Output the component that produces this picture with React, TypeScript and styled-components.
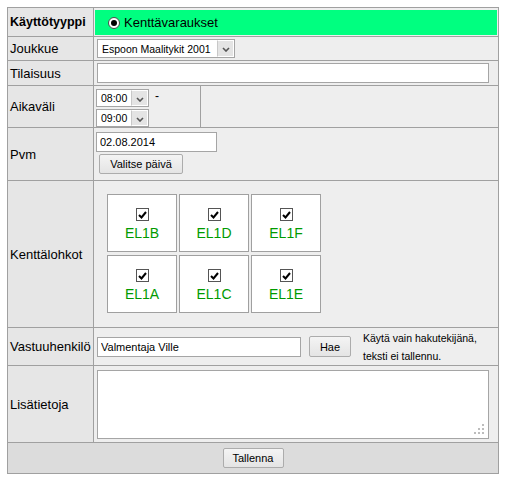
import React from "react"
import styled, { createGlobalStyle } from "styled-components"

const GlobalStyle = createGlobalStyle`
    html, body {
        margin: 0;
        padding: 0;
        background: #fff;
    }
    body {
        font-family: "Liberation Sans", Arial, sans-serif;
        color: #000;
    }
    * {
        box-sizing: border-box;
    }
`

const fields = [
    { code: "EL1B", checked: true },
    { code: "EL1D", checked: true },
    { code: "EL1F", checked: true },
    { code: "EL1A", checked: true },
    { code: "EL1C", checked: true },
    { code: "EL1E", checked: true },
]

function Chevron() {
    return (
        <svg width="8" height="5" viewBox="0 0 8 5">
            <path d="M1 1 L4 4 L7 1" fill="none" stroke="#555" strokeWidth="1.6" />
        </svg>
    )
}

function Select({ value, width, height }: { value: string; width: number; height: number }) {
    return (
        <SelectBox $w={width} $h={height}>
            <SelectText>{value}</SelectText>
            <ArrowBox>
                <Chevron />
            </ArrowBox>
        </SelectBox>
    )
}

function CheckMark() {
    return (
        <CheckBox>
            <svg width="9" height="8" viewBox="0 0 9 8">
                <path d="M1 4 L3.5 6.5 L8 1" fill="none" stroke="#000" strokeWidth="2" />
            </svg>
        </CheckBox>
    )
}

function App() {
    return (
        <Page>
            <GlobalStyle />
            <Form>
                <Label $bold>Käyttötyyppi</Label>
                <TypeCell>
                    <GreenBar>
                        <Radio />
                        <span>Kenttävaraukset</span>
                    </GreenBar>
                </TypeCell>

                <Label>Joukkue</Label>
                <Value>
                    <Select value="Espoon Maalitykit 2001" width={138} height={19} />
                </Value>

                <Label>Tilaisuus</Label>
                <Value>
                    <TextInput $w={392} />
                </Value>

                <Label>Aikaväli</Label>
                <SplitCell>
                    <TimePart>
                        <TimeRow>
                            <Select value="08:00" width={53} height={18} />
                            <Dash>-</Dash>
                        </TimeRow>
                        <TimeRow>
                            <Select value="09:00" width={53} height={18} />
                        </TimeRow>
                    </TimePart>
                    <EmptyPart />
                </SplitCell>

                <Label>Pvm</Label>
                <DateCell>
                    <TextInput $w={121} defaultValue="02.08.2014" />
                    <DateButton>Valitse päivä</DateButton>
                </DateCell>

                <Label>Kenttälohkot</Label>
                <FieldCell>
                    <FieldGrid>
                        {fields.map((f) => (
                            <Tile key={f.code}>
                                {f.checked && <CheckMark />}
                                <TileCode>{f.code}</TileCode>
                            </Tile>
                        ))}
                    </FieldGrid>
                </FieldCell>

                <Label>Vastuuhenkilö</Label>
                <Value>
                    <TextInput $w={204} defaultValue="Valmentaja Ville" />
                    <SearchButton>Hae</SearchButton>
                    <Hint>
                        Käytä vain hakutekijänä,
                        <br />
                        teksti ei tallennu.
                    </Hint>
                </Value>

                <Label>Lisätietoja</Label>
                <NotesCell>
                    <NotesWrap>
                        <Notes />
                        <Grip width="12" height="12" viewBox="0 0 12 12">
                            <rect x="8" y="0" width="2" height="2" />
                            <rect x="4" y="4" width="2" height="2" />
                            <rect x="8" y="4" width="2" height="2" />
                            <rect x="0" y="8" width="2" height="2" />
                            <rect x="4" y="8" width="2" height="2" />
                            <rect x="8" y="8" width="2" height="2" />
                        </Grip>
                    </NotesWrap>
                </NotesCell>

                <Footer>
                    <SaveButton>Tallenna</SaveButton>
                </Footer>
            </Form>
        </Page>
    )
}

// taulukko

const Page = styled.div`
    padding: 7px;
`

const Form = styled.div`
    display: grid;
    grid-template-columns: 85px 404px;
    grid-template-rows: 28px 23px 24px 41px 52px 146px 37px 76px 30px;
    gap: 1px;
    padding: 1px;
    width: fit-content;
    background: #a0a0a0;
`

const Label = styled.div<{ $bold?: boolean }>`
    display: flex;
    align-items: center;
    padding-left: 2px;
    background: #e6e6e6;
    font-size: ${(p) => (p.$bold ? "12.5px" : "13px")};
    font-weight: ${(p) => (p.$bold ? 700 : 400)};
    white-space: nowrap;
    overflow: hidden;
`

const Value = styled.div`
    display: flex;
    align-items: center;
    padding-left: 3px;
    background: #eeeeee;
    font-size: 11px;
`

const TypeCell = styled(Value)`
    align-items: stretch;
    padding: 2px 1px 1px 1px;
`

const GreenBar = styled.div`
    flex: 1;
    display: flex;
    align-items: center;
    gap: 4px;
    padding-left: 13px;
    background: #00ff80;
    font-size: 13px;
`

const Radio = styled.span`
    position: relative;
    width: 12px;
    height: 12px;
    border: 1px solid #4a4a4a;
    border-radius: 50%;
    background: #fff;
    &::after {
        content: "";
        position: absolute;
        left: 2px;
        top: 2px;
        width: 6px;
        height: 6px;
        border-radius: 50%;
        background: #000;
    }
`

// lomakekentät

const SelectBox = styled.div<{ $w: number; $h: number }>`
    display: flex;
    width: ${(p) => p.$w}px;
    height: ${(p) => p.$h}px;
    border: 1px solid #a5a5a5;
    background: #fff;
`

const SelectText = styled.span`
    flex: 1;
    display: flex;
    align-items: center;
    padding-left: 4px;
    font-size: 10.5px;
    white-space: nowrap;
    overflow: hidden;
`

const ArrowBox = styled.span`
    width: 17px;
    display: flex;
    align-items: center;
    justify-content: center;
    padding-top: 2px;
    background: #e4e4e4;
    border: 1px solid #fff;
    border-left: 1px solid #c8c8c8;
`

const TextInput = styled.input<{ $w: number }>`
    width: ${(p) => p.$w}px;
    height: 20px;
    margin: 0;
    padding: 0 3px;
    border: 1px solid #a5a5a5;
    background: #fff;
    font-family: inherit;
    font-size: 11px;
    color: #000;
    outline: none;
`

const Button = styled.button`
    height: 20px;
    margin: 0;
    padding: 0;
    border: 1px solid #acacac;
    border-radius: 2px;
    background: linear-gradient(#f4f4f4, #e4e4e4);
    font-family: inherit;
    font-size: 11px;
    color: #000;
`

const SplitCell = styled(Value)`
    align-items: stretch;
    padding: 0;
`

const TimePart = styled.div`
    width: 107px;
    display: flex;
    flex-direction: column;
    gap: 2px;
    padding: 3px 0 0 2px;
    border-right: 1px solid #a0a0a0;
`

const TimeRow = styled.div`
    display: flex;
    align-items: flex-start;
`

const Dash = styled.span`
    margin-left: 6px;
    font-size: 12px;
    line-height: 14px;
`

const EmptyPart = styled.div`
    flex: 1;
`

const DateCell = styled(Value)`
    flex-direction: column;
    align-items: flex-start;
    padding: 4px 0 0 2px;
`

const DateButton = styled(Button)`
    width: 84px;
    margin: 2px 0 0 3px;
`

// kenttälohkot

const FieldCell = styled(Value)`
    align-items: flex-start;
    padding: 13px 0 0 13px;
`

const FieldGrid = styled.div`
    display: grid;
    grid-template-columns: repeat(3, 70px);
    grid-auto-rows: 58px;
    column-gap: 2px;
    row-gap: 3px;
`

const Tile = styled.div`
    display: flex;
    flex-direction: column;
    align-items: center;
    padding-top: 13px;
    border: 1px solid #a0a0a0;
    background: #fff;
`

const CheckBox = styled.span`
    width: 13px;
    height: 13px;
    display: flex;
    align-items: center;
    justify-content: center;
    border: 1px solid #555;
    background: #fff;
`

const TileCode = styled.span`
    margin-top: 4px;
    font-size: 14px;
    line-height: 16px;
    color: #009a00;
`

// vastuuhenkilö ja lisätiedot

const SearchButton = styled(Button)`
    width: 42px;
    height: 21px;
    margin-left: 8px;
`

const Hint = styled.span`
    margin-left: 12px;
    font-size: 10.5px;
    line-height: 18px;
`

const NotesCell = styled(Value)`
    align-items: flex-start;
    padding: 4px 0 0 3px;
`

const NotesWrap = styled.div`
    position: relative;
    width: 392px;
    height: 69px;
`

const Notes = styled.textarea`
    display: block;
    width: 100%;
    height: 100%;
    margin: 0;
    border: 1px solid #a5a5a5;
    background: #fff;
    resize: none;
    outline: none;
`

const Grip = styled.svg`
    position: absolute;
    right: 3px;
    bottom: 3px;
    fill: #bdbdbd;
`

const Footer = styled.div`
    grid-column: 1 / span 2;
    display: flex;
    align-items: center;
    justify-content: center;
    background: #dcdcdc;
`

const SaveButton = styled(Button)`
    width: 61px;
`

export default App
